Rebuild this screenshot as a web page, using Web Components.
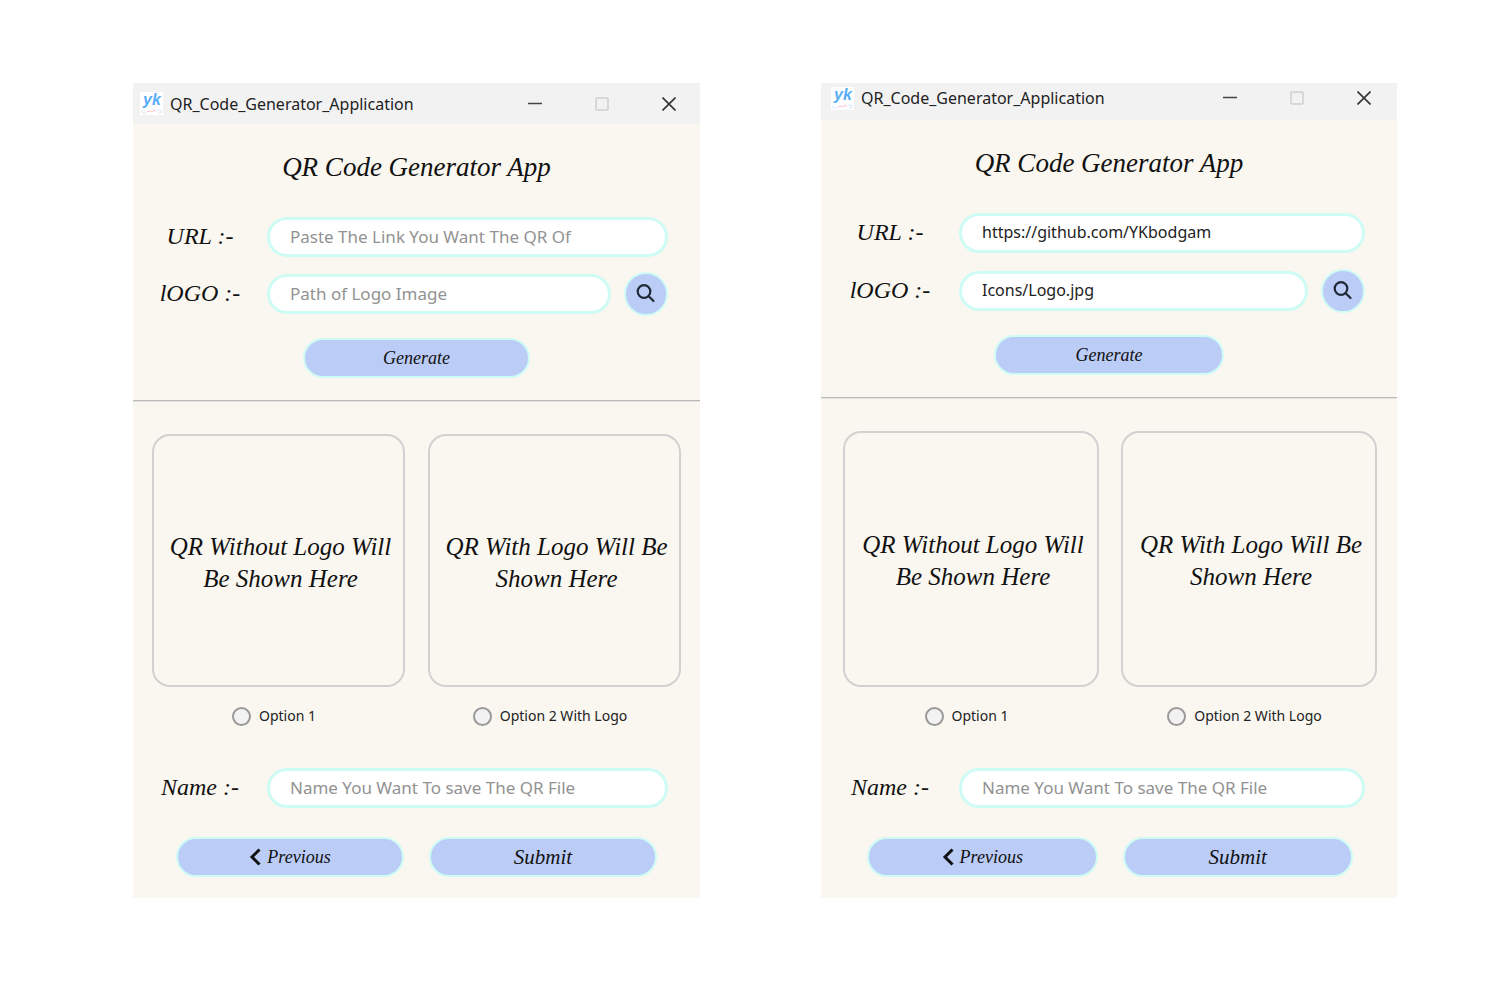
<!DOCTYPE html>
<html lang="en">
<head>
<meta charset="utf-8">
<title>QR Code Generator App</title>
<style>
  body {
    margin: 0;
    background: #fff;
    color: #111;
    font-family: "Noto Sans", "Open Sans", sans-serif;
    --script: "Monotype Corsiva", "Liberation Serif", serif;
    --cream: #faf7f0;
    --aqua: #cffbf5;
    --periwinkle: #bbccf7;
  }
  main {
    display: grid;
    grid-template-columns: 567fr 576fr;
    gap: 121px;
    align-items: start;
    padding: 83px 115px 84px 133px;
  }
  .empty {
    --bar-height: 41px;
    --bar-pad: 0 24px 0 7px;
    --label-col: 134px;
    --field-gap: 15px;
    --card-pad: 0 19px;
    --card-gap: 23px;
    --action-pad: 0 43px;
  }
  .filled {
    --bar-height: 37px;
    --bar-pad: 0 26px 7px 10px;
    --label-col: 138px;
    --field-gap: 16px;
    --card-pad: 0 20px 0 22px;
    --card-gap: 22px;
    --action-pad: 0 44px 0 46px;
  }
</style>
</head>
<body>
<main>
  <qr-window class="empty"></qr-window>
  <qr-window class="filled" url="https://github.com/YKbodgam" logo="Icons/Logo.jpg"></qr-window>
</main>

<script>
class BaseElement extends HTMLElement {
  render(html) {
    const template = document.createElement('template');
    template.innerHTML = html;
    this.attachShadow({ mode: 'open' }).append(template.content.cloneNode(true));
  }
}

customElements.define('title-bar', class extends BaseElement {
  connectedCallback() {
    this.render(`
      <style>
        :host { display: flex; align-items: center; box-sizing: border-box; height: var(--bar-height);
          padding: var(--bar-pad); background: #f2f2f2; color: #222; font-size: 16px; line-height: 24px; }
        .logo { width: 23px; height: 23px; margin-right: 7px; flex: none; }
        .name { flex: 1; white-space: nowrap; }
        .controls { display: flex; gap: 53px; }
        button { display: block; width: 14px; height: 14px; padding: 0; border: 0; background: none; }
        button svg { display: block; }
      </style>
      <svg class="logo" viewBox="0 0 23 23" aria-hidden="true">
        <rect width="23" height="23" fill="#fff"/>
        <text x="3" y="13" font-family="Liberation Sans, sans-serif" font-size="16" font-weight="bold" font-style="italic" fill="#5aaef6">yk</text>
        <path d="M7 20l3-1 2 1 2-2 2 1" stroke="#f8c4cc" fill="none"/>
        <path d="M2 18v3h4M17 18h4v3h-3" stroke="#d9e8fc" fill="none"/>
      </svg>
      <span class="name"><slot></slot></span>
      <div class="controls">
        <button aria-label="Minimize"><svg width="14" height="14" fill="none" stroke="#444" stroke-width="1.5"><path d="M0 6.5h14"/></svg></button>
        <button aria-label="Maximize" disabled><svg width="14" height="14" fill="none" stroke="#cfcfcf" stroke-width="1.5"><rect x="1" y="1" width="12" height="12" rx="1"/></svg></button>
        <button aria-label="Close"><svg width="14" height="14" fill="none" stroke="#333" stroke-width="1.6"><path d="M.5.5l13 13M13.5.5l-13 13"/></svg></button>
      </div>`);
  }
});

customElements.define('field-row', class extends BaseElement {
  connectedCallback() {
    this.render(`
      <style>
        :host { display: grid; grid-template-columns: var(--label-col) 1fr auto; align-items: center; padding-right: 32px; }
        label { padding-bottom: 2px; font: italic 24px/32px var(--script); text-align: center; white-space: nowrap; }
        input { box-sizing: border-box; width: 100%; min-width: 0; height: 40px; padding: 0 20px 2px; border: 3px solid var(--aqua);
          border-radius: 20px; background: #fff; color: #222; font: 16px/24px "Noto Sans", sans-serif; outline: 0; }
        input:placeholder-shown { font-size: 17px; }
        input::placeholder { color: #929292; opacity: 1; }
        ::slotted(*) { margin-left: 13px; }
      </style>
      <label for="field"></label>
      <input id="field" type="text">
      <slot></slot>`);
    this.shadowRoot.querySelector('label').textContent = this.getAttribute('label');
    const input = this.shadowRoot.querySelector('input');
    input.placeholder = this.getAttribute('placeholder');
    input.value = this.getAttribute('value') || '';
  }
});

customElements.define('pill-button', class extends BaseElement {
  connectedCallback() {
    this.render(`
      <style>
        :host { display: block; }
        button { display: flex; align-items: center; justify-content: center; gap: 6px; box-sizing: border-box; width: 100%; height: 40px;
          padding: 0; border: 2px solid var(--aqua); border-radius: 20px; background: var(--periwinkle); color: #111;
          font: italic 18px/24px var(--script); }
        :host([large]) button { font-size: 21px; }
        :host([round]) button { width: 44px; height: 44px; border-radius: 50%; }
      </style>
      <button type="button"><slot></slot></button>`);
    if (this.hasAttribute('name')) this.shadowRoot.querySelector('button').setAttribute('aria-label', this.getAttribute('name'));
  }
});

customElements.define('qr-preview', class extends BaseElement {
  connectedCallback() {
    this.render(`
      <style>
        :host { display: grid; place-items: center; box-sizing: border-box; aspect-ratio: 1; min-width: 0; padding: 4px 0 0 4px;
          border: 2px solid #d1d1d1; border-radius: 18px; }
        p { margin: 0; font: italic 25px/32px var(--script); text-align: center; }
      </style>
      <p><slot></slot></p>`);
  }
});

customElements.define('qr-options', class extends BaseElement {
  connectedCallback() {
    this.render(`
      <style>
        :host { display: grid; grid-template-columns: 1fr 1fr; gap: var(--card-gap); padding: var(--card-pad); }
        label { display: flex; align-items: center; justify-content: center; gap: 8px; height: 20px; padding-right: 9px;
          font-size: 14px; line-height: 20px; color: #222; white-space: nowrap; }
        input { appearance: none; box-sizing: border-box; width: 19px; height: 19px; margin: 0; border: 2px solid #999;
          border-radius: 50%; background: #f2f2f2; }
      </style>
      <label><input type="radio" name="option">Option 1</label>
      <label><input type="radio" name="option">Option 2 With Logo</label>`);
  }
});

customElements.define('qr-window', class extends BaseElement {
  connectedCallback() {
    this.render(`
      <style>
        :host { display: block; min-width: 0; background: var(--cream); }
        h1 { margin: 0; padding: 22px 0 29px; font: italic 27px/42px var(--script); text-align: center; }
        .logo { margin-top: var(--field-gap); }
        .generate { width: 40%; margin: 22px auto; }
        hr { height: 2px; margin: 0 0 32px; border: 0; background: #b9b9b9; border-bottom: 1px solid #e4e2dd; box-sizing: border-box; }
        .previews { display: grid; grid-template-columns: 1fr 1fr; gap: var(--card-gap); padding: var(--card-pad); }
        qr-options { margin: 19px 0 42px; }
        .actions { display: grid; grid-template-columns: 1fr 1fr; gap: 25px; margin-top: 29px; padding: var(--action-pad); }
        footer { height: 21px; }
      </style>
      <title-bar>QR_Code_Generator_Application</title-bar>
      <h1>QR Code Generator App</h1>
      <field-row class="url" label="URL :-" placeholder="Paste The Link You Want The QR Of"></field-row>
      <field-row class="logo" label="lOGO :-" placeholder="Path of Logo Image">
        <pill-button round name="Browse">
          <svg width="20" height="20" viewBox="0 0 20 20" fill="none" stroke="#222936" stroke-width="2.2" stroke-linecap="round" style="display:block"><circle cx="8" cy="7.500" r="6.3"/><path d="M12.700 12.200l4.800 4.800"/></svg>
        </pill-button>
      </field-row>
      <pill-button class="generate">Generate</pill-button>
      <hr>
      <section class="previews">
        <qr-preview>QR Without Logo Will<br>Be Shown Here</qr-preview>
        <qr-preview>QR With Logo Will Be<br>Shown Here</qr-preview>
      </section>
      <qr-options></qr-options>
      <field-row label="Name :-" placeholder="Name You Want To save The QR File"></field-row>
      <div class="actions">
        <pill-button><svg width="12" height="18" viewBox="0 0 12 18" fill="none" stroke="#111" stroke-width="3"><path d="M10.500 1.500L3 9l7.500 7.500"/></svg>Previous</pill-button>
        <pill-button large>Submit</pill-button>
      </div>
      <footer></footer>`);
    for (const key of ['url', 'logo']) {
      if (this.hasAttribute(key)) {
        this.shadowRoot.querySelector('.' + key).shadowRoot.querySelector('input').value = this.getAttribute(key);
      }
    }
  }
});
</script>
</body>
</html>
